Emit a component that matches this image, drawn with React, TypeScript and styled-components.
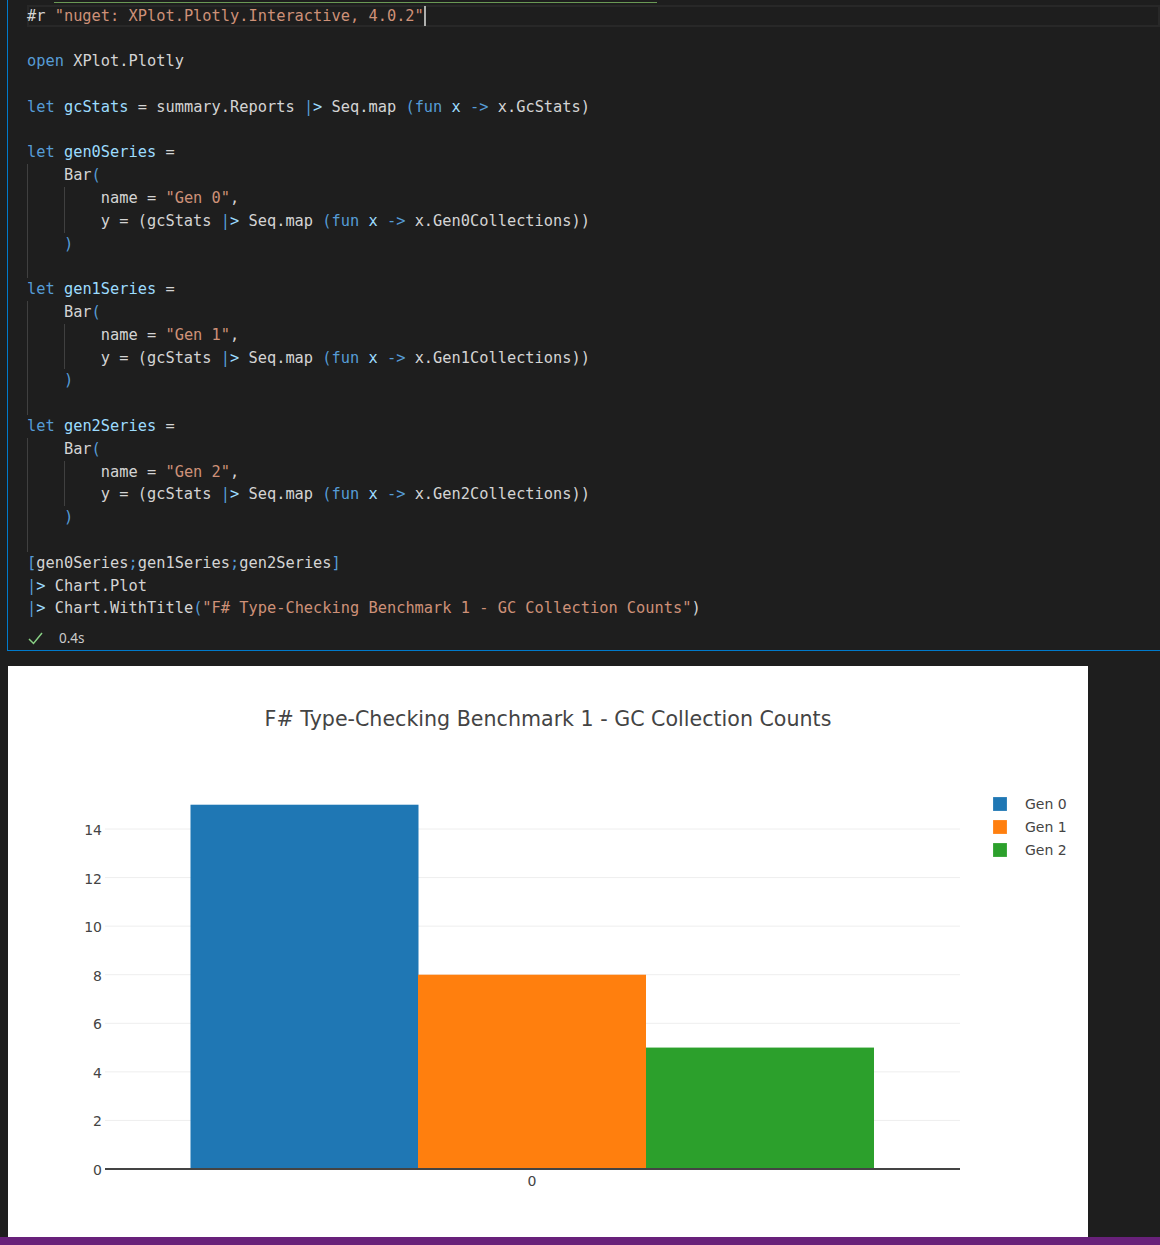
import React from "react";
import styled, { createGlobalStyle } from "styled-components";

const Global = createGlobalStyle`
  html, body { margin: 0; padding: 0; background: #1e1e1e; }
  #root { width: 1160px; }
`;

type Kind = "t" | "k" | "v" | "s";
const colors: Record<Kind, string> = {
  t: "#d4d4d4",
  k: "#569cd6",
  v: "#9cdcfe",
  s: "#ce9178",
};

const Page = styled.div`
  width: 1160px;
  display: flex;
  flex-direction: column;
  background: #1e1e1e;
`;

const Cell = styled.div`
  margin-left: 7px;
  border-left: 1px solid #007acc;
  border-bottom: 1px solid #007acc;
  display: flex;
  flex-direction: column;
`;

const ProgressRow = styled.div`
  height: 4.6px;
  box-sizing: border-box;
  padding: 2.4px 0 0 46px;
`;

const Progress = styled.div`
  width: 603px;
  height: 1px;
  background: #6a9955;
`;

const Editor = styled.div`
  padding-left: 19px;
  display: flex;
  flex-direction: column;
  font-family: "DejaVu Sans Mono", "Liberation Mono", monospace;
  font-size: 15.33px;
`;

const Line = styled.div<{ $current?: boolean }>`
  display: flex;
  align-items: stretch;
  height: 22.8px;
  line-height: 22.8px;
  white-space: pre;
  box-shadow: ${(p) => (p.$current ? "inset 0 0 0 2px #282828" : "none")};
`;

const Guide = styled.span`
  width: 4ch;
  flex: none;
  box-sizing: border-box;
  border-left: 1px solid #404040;
`;

const Tok = styled.span<{ $k: Kind }>`
  color: ${(p) => colors[p.$k]};
`;

const Cursor = styled.span`
  width: 2px;
  height: 20px;
  align-self: center;
  background: #aeafad;
`;

const Status = styled.div`
  display: flex;
  align-items: center;
  height: 24px;
  margin-top: 6px;
  padding-left: 20px;
`;

const Time = styled.span`
  margin-left: 16px;
  font-family: "Noto Sans", "Open Sans", sans-serif;
  font-size: 13.5px;
  color: #cccccc;
`;

const Output = styled.div`
  margin: 15px 0 0 8px;
  width: 1080px;
  height: 571px;
  background: #ffffff;
`;

const StatusBar = styled.div`
  height: 8px;
  background: #68217a;
`;

type T = [Kind, string];
type L = { guides?: number; toks?: T[]; current?: boolean };

const pipe: T[] = [["k", "|"], ["v", ">"]];

const barBlock = (n: number): L[] => [
  { toks: [["k", "let"], ["t", " "], ["v", `gen${n}Series`], ["t", " ="]] },
  { guides: 1, toks: [["t", "Bar"], ["k", "("]] },
  { guides: 2, toks: [["t", "name = "], ["s", `"Gen ${n}"`], ["t", ","]] },
  {
    guides: 2,
    toks: [
      ["t", "y = (gcStats "],
      ...pipe,
      ["t", " Seq.map "],
      ["k", "(fun"],
      ["t", " "],
      ["v", "x"],
      ["t", " "],
      ["k", "->"],
      ["t", ` x.Gen${n}Collections))`],
    ],
  },
  { guides: 1, toks: [["k", ")"]] },
  { guides: 1, toks: [] },
];

const lines: L[] = [
  { current: true, toks: [["t", "#r "], ["s", '"nuget: XPlot.Plotly.Interactive, 4.0.2"']] },
  { toks: [] },
  { toks: [["k", "open"], ["t", " XPlot.Plotly"]] },
  { toks: [] },
  {
    toks: [
      ["k", "let"],
      ["t", " "],
      ["v", "gcStats"],
      ["t", " = summary.Reports "],
      ...pipe,
      ["t", " Seq.map "],
      ["k", "(fun"],
      ["t", " "],
      ["v", "x"],
      ["t", " "],
      ["k", "->"],
      ["t", " x.GcStats)"],
    ],
  },
  { toks: [] },
  ...barBlock(0),
  ...barBlock(1),
  ...barBlock(2),
  {
    toks: [
      ["k", "["],
      ["t", "gen0Series"],
      ["k", ";"],
      ["t", "gen1Series"],
      ["k", ";"],
      ["t", "gen2Series"],
      ["k", "]"],
    ],
  },
  { toks: [...pipe, ["t", " Chart.Plot"]] },
  {
    toks: [
      ...pipe,
      ["t", " Chart.WithTitle"],
      ["k", "("],
      ["s", '"F# Type-Checking Benchmark 1 - GC Collection Counts"'],
      ["t", ")"],
    ],
  },
];

const CheckIcon = () => (
  <svg width="15" height="13" viewBox="0 0 15 13">
    <polyline points="1,7 5.5,11.5 14,1" fill="none" stroke="#89d185" strokeWidth="1.5" />
  </svg>
);

const unit = 340 / 14;
const y0 = 503;
const yOf = (v: number) => y0 - v * unit;

const chartFont = '"DejaVu Sans", Verdana, sans-serif';

const bars = [
  { x: 182.5, v: 15, c: "#1f77b4" },
  { x: 410, v: 8, c: "#ff7f0e" },
  { x: 638, v: 5, c: "#2ca02c" },
];

const legend = [
  { name: "Gen 0", c: "#1f77b4" },
  { name: "Gen 1", c: "#ff7f0e" },
  { name: "Gen 2", c: "#2ca02c" },
];

const Chart = () => (
  <svg width="1080" height="571" viewBox="0 0 1080 571">
    <text
      x="540"
      y="53"
      textAnchor="middle"
      dominantBaseline="central"
      fontFamily={chartFont}
      fontSize="20.6"
      fill="#444"
    >
      F# Type-Checking Benchmark 1 - GC Collection Counts
    </text>
    {[2, 4, 6, 8, 10, 12, 14].map((v) => (
      <line key={v} x1="97" x2="952" y1={yOf(v)} y2={yOf(v)} stroke="#eeeeee" strokeWidth="1" />
    ))}
    {bars.map((b) => (
      <rect key={b.c} x={b.x} y={yOf(b.v)} width={228} height={b.v * unit} fill={b.c} />
    ))}
    <line x1="97" x2="952" y1={y0} y2={y0} stroke="#444" strokeWidth="2" />
    {[0, 2, 4, 6, 8, 10, 12, 14].map((v) => (
      <text
        key={v}
        x="94"
        y={yOf(v) + 1}
        textAnchor="end"
        dominantBaseline="central"
        fontFamily={chartFont}
        fontSize="14"
        fill="#444"
      >
        {v}
      </text>
    ))}
    <text
      x="524"
      y="515"
      textAnchor="middle"
      dominantBaseline="central"
      fontFamily={chartFont}
      fontSize="14"
      fill="#444"
    >
      0
    </text>
    {legend.map((l, i) => (
      <g key={l.name}>
        <rect x="985" y={131 + i * 23} width="14" height="14" fill={l.c} stroke="rgba(255,255,255,0.4)" strokeWidth="0.5" />
        <text
          x="1017"
          y={138 + i * 23}
          dominantBaseline="central"
          fontFamily={chartFont}
          fontSize="14"
          fill="#444"
        >
          {l.name}
        </text>
      </g>
    ))}
  </svg>
);

export default function App() {
  return (
    <Page>
      <Global />
      <Cell>
        <ProgressRow>
          <Progress />
        </ProgressRow>
        <Editor>
          {lines.map((l, i) => (
            <Line key={i} $current={l.current}>
              {Array.from({ length: l.guides ?? 0 }).map((_, g) => (
                <Guide key={g} />
              ))}
              {(l.toks ?? []).map((t, j) => (
                <Tok key={j} $k={t[0]}>
                  {t[1]}
                </Tok>
              ))}
              {l.current && <Cursor />}
            </Line>
          ))}
        </Editor>
        <Status>
          <CheckIcon />
          <Time>0.4s</Time>
        </Status>
      </Cell>
      <Output>
        <Chart />
      </Output>
      <StatusBar />
    </Page>
  );
}
